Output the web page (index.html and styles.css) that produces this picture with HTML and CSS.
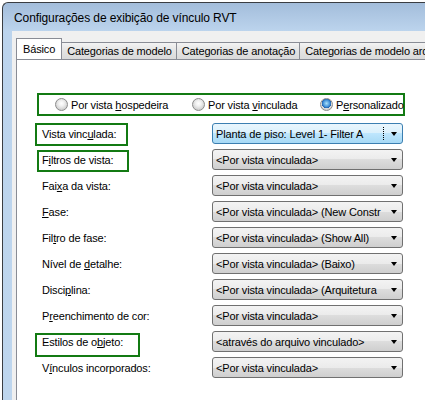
FILE: index.html
```html
<!DOCTYPE html>
<html lang="pt">
<head>
<meta charset="utf-8">
<title>Configurações de exibição de vínculo RVT</title>
<link rel="stylesheet" href="styles.css">
</head>
<body>
<div class="window">
  <div class="titlebar">Configurações de exibição de vínculo RVT</div>
  <div class="client">
    <div class="tabs">
      <div class="tab active">Básico</div>
      <div class="tab">Categorias de modelo</div>
      <div class="tab">Categorias de anotação</div>
      <div class="tab last">Categorias de modelo arquivo vinculado</div>
    </div>
    <div class="panel">
      <div class="radios">
        <label class="radio"><span class="dot"></span><span>Por vista <u>h</u>ospedeira</span></label>
        <label class="radio"><span class="dot"></span><span>Por vista <u>v</u>inculada</span></label>
        <label class="radio"><span class="dot on"></span><span>P<u>e</u>rsonalizado</span></label>
      </div>
      <div class="form">
        <div class="label"><span class="mark mark-a">Vista vinc<u>u</u>lada:</span></div>
        <div class="combo focus"><span class="val"><span class="focusrect">Planta de piso: Level 1- Filter A</span></span><span class="arrow"></span></div>

        <div class="label"><span class="mark mark-b">F<u>i</u>ltros de vista:</span></div>
        <div class="combo"><span class="val">&lt;Por vista vinculada&gt;</span><span class="arrow"></span></div>

        <div class="label"><span>Fai<u>x</u>a da vista:</span></div>
        <div class="combo"><span class="val">&lt;Por vista vinculada&gt;</span><span class="arrow"></span></div>

        <div class="label"><span><u>F</u>ase:</span></div>
        <div class="combo"><span class="val">&lt;Por vista vinculada&gt; (New Constr</span><span class="arrow"></span></div>

        <div class="label"><span>Fil<u>t</u>ro de fase:</span></div>
        <div class="combo"><span class="val">&lt;Por vista vinculada&gt; (Show All)</span><span class="arrow"></span></div>

        <div class="label"><span>Nível de <u>d</u>etalhe:</span></div>
        <div class="combo"><span class="val">&lt;Por vista vinculada&gt; (Baixo)</span><span class="arrow"></span></div>

        <div class="label"><span>Disci<u>p</u>lina:</span></div>
        <div class="combo"><span class="val">&lt;Por vista vinculada&gt; (Arquitetura</span><span class="arrow"></span></div>

        <div class="label"><span>P<u>r</u>eenchimento de cor:</span></div>
        <div class="combo"><span class="val">&lt;Por vista vinculada&gt;</span><span class="arrow"></span></div>

        <div class="label"><span class="mark mark-c">Estilos de o<u>b</u>jeto:</span></div>
        <div class="combo"><span class="val">&lt;através do arquivo vinculado&gt;</span><span class="arrow"></span></div>

        <div class="label"><span>V<u>í</u>nculos incorporados:</span></div>
        <div class="combo"><span class="val">&lt;Por vista vinculada&gt;</span><span class="arrow"></span></div>
      </div>
    </div>
  </div>
</div>
</body>
</html>
```

FILE: styles.css
```css
html, body {
  margin: 0;
  padding: 0;
  height: 400px;
  overflow: hidden;
  background: #ffffff;
}
body {
  font-family: "Liberation Sans", Arial, sans-serif;
  font-size: 11px;
  letter-spacing: -0.15px;
  color: #000;
}
u { text-decoration: underline; text-underline-offset: 1px; }

.window {
  margin: 2px 0 0 2px;
  width: 423px;
  height: 398px;
  overflow: hidden;
  border: 1px solid #3a3d42;
  border-right: none;
  border-bottom: none;
  border-top-left-radius: 6px;
  background: linear-gradient(#a3bddb 0px, #bcd4ed 28px, #bed6ee 100%);
  box-sizing: border-box;
  display: flex;
  flex-direction: column;
}
.titlebar {
  height: 28px;
  padding-left: 11px;
  display: flex;
  align-items: center;
  font-size: 12px;
  letter-spacing: -0.1px;
  padding-top: 1px;
  box-sizing: border-box;
  flex: none;
}
.client {
  flex: 1;
  min-width: 0;
  margin-left: 9px;
  background: #f0f0f0;
  padding: 7px 0 0 4px;
  display: flex;
  flex-direction: column;
}
.tabs {
  display: flex;
  height: 21px;
  align-items: flex-end;
  position: relative;
  z-index: 1;
  white-space: nowrap;
  flex: none;
  overflow: hidden;
}
.tab {
  height: 17px;
  box-sizing: border-box;
  border: 1px solid #898c95;
  border-bottom: none;
  border-left: none;
  background: linear-gradient(#f3f3f3, #e3e3e3 50%, #dadada 100%);
  padding: 0 4px 0 5px;
  line-height: 16px;
  flex: none;
}
.tab.active {
  height: 22px;
  margin-bottom: -1px;
  border-left: 1px solid #898c95;
  background: #ffffff;
  padding: 0 6px 0 6px;
  line-height: 20px;
}
.panel {
  flex: 1;
  background: #fff;
  border-top: 1px solid #898c95;
  border-left: 1px solid #898c95;
  padding: 33px 0 0 20px;
}
.radios {
  width: 368px;
  height: 23px;
  box-sizing: border-box;
  border: 2px solid #137a13;
  display: grid;
  grid-template-columns: 137px 128px auto;
  align-items: center;
  padding-left: 16px;
}
.radio {
  display: flex;
  align-items: center;
  gap: 3px;
  white-space: nowrap;
}
.dot {
  width: 13px;
  height: 13px;
  box-sizing: border-box;
  border-radius: 50%;
  border: 1px solid #8b8b8b;
  background: radial-gradient(circle at 50% 40%, #ffffff 0, #f2f2f2 30%, #d2d2d2 70%, #c0c0c0 100%);
  flex: none;
}
.dot.on {
  background:
    radial-gradient(circle at 50% 40%, #a9e1fb 0, #3f8ed6 40%, #1c5ba8 55%, transparent 57%),
    radial-gradient(circle at 50% 40%, #ffffff 0, #f2f2f2 30%, #d2d2d2 70%, #c0c0c0 100%);
}
.form {
  margin-top: 7px;
  margin-left: 5px;
  display: grid;
  grid-template-columns: 170px 191px;
  grid-auto-rows: 21px;
  row-gap: 5px;
}
.label {
  display: flex;
  align-items: center;
  white-space: nowrap;
}
.mark {
  position: relative;
}
.mark::before {
  content: "";
  position: absolute;
  border: 2px solid #137a13;
  box-sizing: border-box;
}
.mark-a::before { left: -7px; top: -5px; width: 93px; height: 23px; }
.mark-b::before { left: -5px; top: -4px; width: 92px; height: 22px; }
.mark-c::before { left: -7px; top: -3px; width: 105px; height: 24px; }

.combo {
  box-sizing: border-box;
  height: 21px;
  border: 1px solid #707070;
  border-radius: 3px;
  background: linear-gradient(#f3f3f3 0%, #ebebeb 50%, #dddddd 50%, #cfcfcf 100%);
  display: flex;
  align-items: center;
  padding: 0 5px 0 3px;
}
.combo.focus {
  border-color: #3c7fb1;
  background: linear-gradient(#eaf6fd 0%, #d9f0fc 50%, #bee6fd 50%, #a7d9f5 100%);
}
.val {
  flex: 1;
  overflow: hidden;
  white-space: nowrap;
  min-width: 0;
}
.focusrect {
  display: block;
  outline: 1px dotted #000;
  outline-offset: 0;
  margin-right: 4px;
  line-height: 14px;
}
.arrow {
  flex: none;
  width: 0;
  height: 0;
  border-top: 4px solid #000;
  border-left: 3.5px solid transparent;
  border-right: 3.5px solid transparent;
  margin-left: 4px;
}
```
